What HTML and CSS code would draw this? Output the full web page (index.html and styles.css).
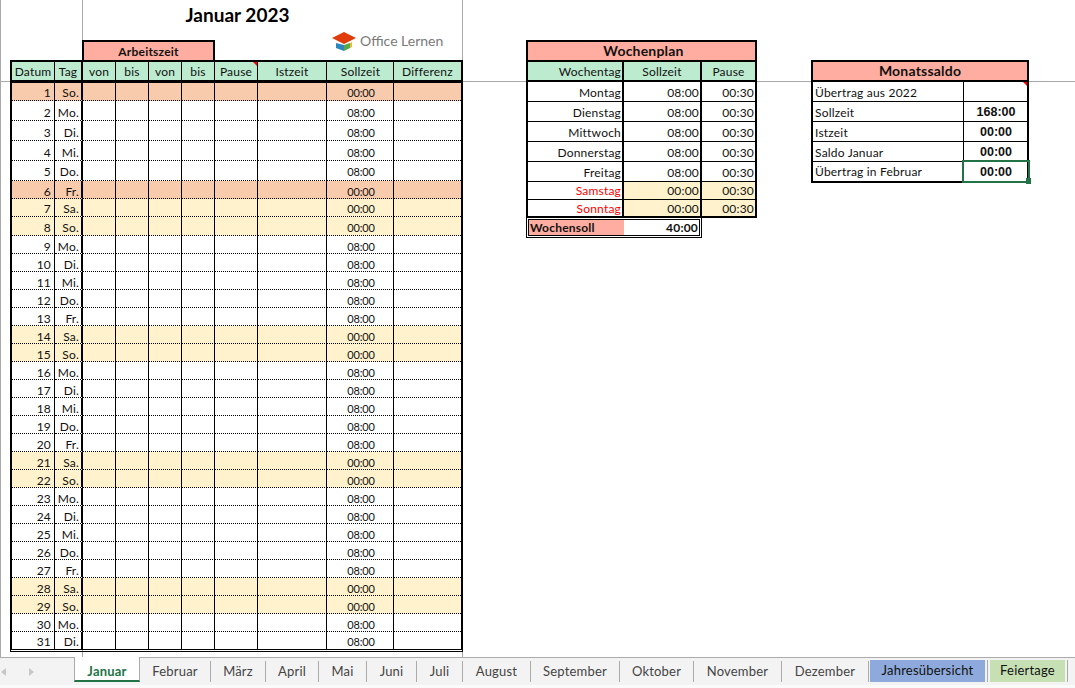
FILE: index.html
```html
<!DOCTYPE html>
<html lang="de">
<head>
<meta charset="utf-8">
<title>Januar 2023</title>
<link rel="stylesheet" href="styles.css">
</head>
<body>
<div class="sheet">
  <span class="grid-line v-left"></span>
  <span class="grid-line v-freeze"></span>
  <span class="grid-line v-right"></span>
  <span class="grid-line h-freeze"></span>
  <section class="month">
    <h1 class="title">Januar 2023</h1>
    <div class="band">Arbeitszeit</div>
    <div class="logo">
      <svg width="24" height="20" viewBox="0 0 24 20"><path d="M4 12v5l8 3V14z" fill="#2e86c1"/><path d="M12 14v6l6-3v-5z" fill="#5aa845"/><path d="M18 12v5l2-1v-5z" fill="#f2b632"/><path d="M0 7 12 1l12 6-12 6z" fill="#e03c0a"/></svg>
      <span>Office Lernen</span>
    </div>
    <table class="days">
      <colgroup><col class="c-dat"><col class="c-tag"><col class="c-t"><col class="c-t"><col class="c-t"><col class="c-t"><col class="c-pau"><col class="c-ist"><col class="c-sol"><col class="c-dif"></colgroup>
      <thead><tr><th>Datum</th><th class="tag">Tag</th><th>von</th><th>bis</th><th>von</th><th>bis</th><th class="note">Pause</th><th>Istzeit</th><th>Sollzeit</th><th>Differenz</th></tr></thead>
      <tbody>
        <tr class="r18 low hol"><td class="n">1</td><td class="d">So.</td><td></td><td></td><td></td><td></td><td></td><td></td><td>00:00</td><td></td></tr>
        <tr class="r20 low"><td class="n">2</td><td class="d">Mo.</td><td></td><td></td><td></td><td></td><td></td><td></td><td>08:00</td><td></td></tr>
        <tr class="r20 low"><td class="n">3</td><td class="d">Di.</td><td></td><td></td><td></td><td></td><td></td><td></td><td>08:00</td><td></td></tr>
        <tr class="r20 low"><td class="n">4</td><td class="d">Mi.</td><td></td><td></td><td></td><td></td><td></td><td></td><td>08:00</td><td></td></tr>
        <tr class="r20"><td class="n">5</td><td class="d">Do.</td><td></td><td></td><td></td><td></td><td></td><td></td><td>08:00</td><td></td></tr>
        <tr class="r18 lower hol"><td class="n">6</td><td class="d">Fr.</td><td></td><td></td><td></td><td></td><td></td><td></td><td>00:00</td><td></td></tr>
        <tr class="r18 low wk"><td class="n">7</td><td class="d">Sa.</td><td></td><td></td><td></td><td></td><td></td><td></td><td>00:00</td><td></td></tr>
        <tr class="r19 low wk"><td class="n">8</td><td class="d">So.</td><td></td><td></td><td></td><td></td><td></td><td></td><td>00:00</td><td></td></tr>
        <tr class="r18 lower"><td class="n">9</td><td class="d">Mo.</td><td></td><td></td><td></td><td></td><td></td><td></td><td>08:00</td><td></td></tr>
        <tr class="r18 lower"><td class="n">10</td><td class="d">Di.</td><td></td><td></td><td></td><td></td><td></td><td></td><td>08:00</td><td></td></tr>
        <tr class="r18 lower"><td class="n">11</td><td class="d">Mi.</td><td></td><td></td><td></td><td></td><td></td><td></td><td>08:00</td><td></td></tr>
        <tr class="r18 lower"><td class="n">12</td><td class="d">Do.</td><td></td><td></td><td></td><td></td><td></td><td></td><td>08:00</td><td></td></tr>
        <tr class="r18 lower"><td class="n">13</td><td class="d">Fr.</td><td></td><td></td><td></td><td></td><td></td><td></td><td>08:00</td><td></td></tr>
        <tr class="r18 lower wk"><td class="n">14</td><td class="d">Sa.</td><td></td><td></td><td></td><td></td><td></td><td></td><td>00:00</td><td></td></tr>
        <tr class="r18 lower wk"><td class="n">15</td><td class="d">So.</td><td></td><td></td><td></td><td></td><td></td><td></td><td>00:00</td><td></td></tr>
        <tr class="r18 lower"><td class="n">16</td><td class="d">Mo.</td><td></td><td></td><td></td><td></td><td></td><td></td><td>08:00</td><td></td></tr>
        <tr class="r18 lower"><td class="n">17</td><td class="d">Di.</td><td></td><td></td><td></td><td></td><td></td><td></td><td>08:00</td><td></td></tr>
        <tr class="r18 lower"><td class="n">18</td><td class="d">Mi.</td><td></td><td></td><td></td><td></td><td></td><td></td><td>08:00</td><td></td></tr>
        <tr class="r18 lower"><td class="n">19</td><td class="d">Do.</td><td></td><td></td><td></td><td></td><td></td><td></td><td>08:00</td><td></td></tr>
        <tr class="r18 lower"><td class="n">20</td><td class="d">Fr.</td><td></td><td></td><td></td><td></td><td></td><td></td><td>08:00</td><td></td></tr>
        <tr class="r18 lower wk"><td class="n">21</td><td class="d">Sa.</td><td></td><td></td><td></td><td></td><td></td><td></td><td>00:00</td><td></td></tr>
        <tr class="r18 lower wk"><td class="n">22</td><td class="d">So.</td><td></td><td></td><td></td><td></td><td></td><td></td><td>00:00</td><td></td></tr>
        <tr class="r18 lower"><td class="n">23</td><td class="d">Mo.</td><td></td><td></td><td></td><td></td><td></td><td></td><td>08:00</td><td></td></tr>
        <tr class="r18 lower"><td class="n">24</td><td class="d">Di.</td><td></td><td></td><td></td><td></td><td></td><td></td><td>08:00</td><td></td></tr>
        <tr class="r18 lower"><td class="n">25</td><td class="d">Mi.</td><td></td><td></td><td></td><td></td><td></td><td></td><td>08:00</td><td></td></tr>
        <tr class="r18 lower"><td class="n">26</td><td class="d">Do.</td><td></td><td></td><td></td><td></td><td></td><td></td><td>08:00</td><td></td></tr>
        <tr class="r18 lower"><td class="n">27</td><td class="d">Fr.</td><td></td><td></td><td></td><td></td><td></td><td></td><td>08:00</td><td></td></tr>
        <tr class="r18 lower wk"><td class="n">28</td><td class="d">Sa.</td><td></td><td></td><td></td><td></td><td></td><td></td><td>00:00</td><td></td></tr>
        <tr class="r18 lower wk"><td class="n">29</td><td class="d">So.</td><td></td><td></td><td></td><td></td><td></td><td></td><td>00:00</td><td></td></tr>
        <tr class="r18 lower"><td class="n">30</td><td class="d">Mo.</td><td></td><td></td><td></td><td></td><td></td><td></td><td>08:00</td><td></td></tr>
        <tr class="r17 low last"><td class="n">31</td><td class="d">Di.</td><td></td><td></td><td></td><td></td><td></td><td></td><td>08:00</td><td></td></tr>
      </tbody>
    </table>
  </section>

  <section class="plan">
    <table class="plan-table">
      <colgroup><col class="p-day"><col class="p-sol"><col class="p-pau"></colgroup>
      <thead>
        <tr class="head-salmon"><th colspan="3">Wochenplan</th></tr>
        <tr class="head-green"><th class="right">Wochentag</th><th>Sollzeit</th><th>Pause</th></tr>
      </thead>
      <tbody>
        <tr class="r20"><td>Montag</td><td>08:00</td><td>00:30</td></tr>
        <tr class="r20"><td>Dienstag</td><td>08:00</td><td>00:30</td></tr>
        <tr class="r20"><td>Mittwoch</td><td>08:00</td><td>00:30</td></tr>
        <tr class="r20"><td>Donnerstag</td><td>08:00</td><td>00:30</td></tr>
        <tr class="r20"><td>Freitag</td><td>08:00</td><td>00:30</td></tr>
        <tr class="r18 off"><td>Samstag</td><td>00:00</td><td>00:30</td></tr>
        <tr class="r16 off"><td>Sonntag</td><td>00:00</td><td>00:30</td></tr>
      </tbody>
    </table>
    <div class="total"><span class="total-label">Wochensoll</span><span class="total-value">40:00</span></div>
  </section>

  <section class="saldo">
    <table class="saldo-table">
      <colgroup><col class="s-lab"><col class="s-val"></colgroup>
      <thead><tr><th colspan="2">Monatssaldo</th></tr></thead>
      <tbody>
        <tr class="r20"><td>Übertrag aus 2022</td><td class="note"></td></tr>
        <tr class="r20"><td>Sollzeit</td><td>168:00</td></tr>
        <tr class="r20"><td>Istzeit</td><td>00:00</td></tr>
        <tr class="r20"><td>Saldo Januar</td><td>00:00</td></tr>
        <tr class="r19"><td>Übertrag in Februar</td><td class="selected">00:00</td></tr>
      </tbody>
    </table>
  </section>
</div>

<nav class="tabs">
  <div class="arrows"><span class="arrow-l"></span><span class="arrow-r"></span></div>
  <div class="tab active">Januar</div>
  <div class="tab">Februar</div>
  <div class="tab">März</div>
  <div class="tab">April</div>
  <div class="tab">Mai</div>
  <div class="tab">Juni</div>
  <div class="tab">Juli</div>
  <div class="tab">August</div>
  <div class="tab">September</div>
  <div class="tab">Oktober</div>
  <div class="tab">November</div>
  <div class="tab">Dezember</div>
  <div class="tab blue">Jahresübersicht</div>
  <div class="tab green">Feiertage</div>
</nav>
</body>
</html>
```
FILE: styles.css
```css
* { box-sizing: border-box; }
html, body { margin: 0; padding: 0; }
body {
  width: 1075px;
  height: 688px;
  overflow: hidden;
  background: #fff;
  font-family: Lato, "Liberation Sans", sans-serif;
  font-size: 12px;
  letter-spacing: 0.2px;
  color: #111;
}
.sheet {
  position: relative;
  z-index: 0;
  display: flex;
  align-items: flex-start;
  height: 657px;
  padding-left: 10px;
}
.grid-line { position: absolute; z-index: -1; background: #a9a9a9; }
.v-left { left: 0; top: 0; width: 1px; height: 657px; }
.v-freeze { left: 82px; top: 0; width: 1px; height: 657px; }
.v-right { left: 462px; top: 0; width: 1px; height: 657px; }
.h-freeze { left: 0; top: 81px; width: 1075px; height: 1px; }

.month { position: relative; width: 453px; flex: none; }
.title {
  margin: 0 0 0 72px;
  width: 311px;
  height: 40px;
  padding-top: 2px;
  font-size: 19px;
  line-height: 25px;
  font-weight: 700;
  letter-spacing: 0;
  text-align: center;
  color: #000;
}
.band {
  margin-left: 72px;
  width: 133px;
  height: 22px;
  margin-bottom: -2px;
  border: 2px solid #000;
  border-bottom: 0;
  background: #ffada0;
  text-align: center;
  font-weight: 700;
  line-height: 19px;
}
.logo {
  position: absolute;
  left: 322px;
  top: 31px;
  display: flex;
  align-items: center;
  gap: 4px;
  color: #7a7a7a;
  font-size: 14px;
  letter-spacing: 0;
  line-height: 20px;
}
table { border-collapse: separate; border-spacing: 0; table-layout: fixed; }
td, th { padding: 0; font-weight: 400; overflow: hidden; white-space: nowrap; }

.days { width: 453px; border: 2px solid #000; border-bottom: 3px double #000; position: relative; }
.c-dat { width: 43px; } .c-tag { width: 28px; } .c-t { width: 33px; }
.c-pau { width: 43px; } .c-ist { width: 69px; } .c-sol { width: 67px; } .c-dif { width: 67px; }
.days th {
  height: 21px;
  background: #bdebd0;
  border-right: 1px solid #000;
  border-bottom: 3px solid #000;
  text-align: center;
  line-height: 17px;
  position: relative;
}
.days th.tag { border-right-width: 2px; }
.days th:last-child, .days td:last-child { border-right: 0; }
.days th:nth-child(9) { padding-left: 1px; }
.days td {
  border-right: 1px solid #000;
  border-bottom: 1px dotted #000;
  text-align: center;
  vertical-align: bottom;
  line-height: 17px;
}
.days td:nth-child(9) { padding-left: 2px; font-size: 11px; letter-spacing: -0.2px; }
.days td.d { border-right-width: 2px; text-align: right; padding-right: 2px; }
.days td.n { text-align: right; padding-right: 3px; }
.days .low td { line-height: 15px; }
.days .lower td { line-height: 13px; }
.days tr.last td { border-bottom: 0; }
.r16 td { height: 16px; }
.r17 td { height: 17px; }
.r18 td { height: 18px; }
.r19 td { height: 19px; }
.r20 td { height: 20px; }
.hol td { background: #f8cbad; }
.wk td { background: #fff2cc; }
.note { position: relative; }
.note::after {
  content: "";
  position: absolute;
  top: 0;
  right: 0;
  border-top: 4px solid #f00;
  border-left: 4px solid transparent;
}

.plan { margin: 40px 0 0 63px; width: 231px; flex: none; }
.plan-table { width: 231px; border: 2px solid #000; }
.p-day { width: 96px; } .p-sol { width: 78px; } .p-pau { width: 53px; }
.head-salmon th {
  height: 20px;
  padding-left: 4px;
  background: #ffada0;
  font-weight: 700;
  font-size: 14px;
  line-height: 18px;
  border-bottom: 2px solid #000;
  text-align: center;
}
.head-green th {
  height: 20px;
  background: #bdebd0;
  border-right: 2px solid #000;
  border-bottom: 2px solid #000;
  line-height: 17px;
  text-align: center;
}
.head-green th.right { text-align: right; padding-right: 1px; }
.head-green th:last-child { border-right: 0; }
.plan-table td {
  text-align: right;
  vertical-align: bottom;
  line-height: 17px;
  padding-right: 1px;
  border-right: 2px solid #000;
  border-bottom: 1px solid #000;
}
.plan-table .r16 td { line-height: 15px; }
.plan-table td:last-child { border-right: 0; }
.plan-table tr:last-child td { border-bottom: 0; }
.off td:first-child { color: #f00; }
.off td:not(:first-child) { background: #fff2cc; }
.total {
  display: flex;
  width: 176px;
  height: 21px;
  margin-top: -1px;
  border: 3px double #000;
  font-weight: 700;
  line-height: 15px;
}
.total-label { width: 95px; background: #ffada0; padding-left: 1px; }
.total-value { flex: 1; text-align: right; padding-right: 1px; }

.saldo { margin: 60px 0 0 54px; width: 218px; flex: none; }
.saldo-table { width: 218px; border: 2px solid #000; }
.s-lab { width: 151px; } .s-val { width: 63px; }
.saldo-table th {
  height: 20px;
  background: #ffada0;
  font-weight: 700;
  font-size: 14px;
  line-height: 18px;
  border-bottom: 2px solid #000;
  text-align: center;
}
.saldo-table td {
  vertical-align: bottom;
  line-height: 17px;
  padding-left: 2px;
  border-right: 1px solid #000;
  border-bottom: 1px solid #000;
}
.saldo-table td:last-child {
  border-right: 0;
  text-align: center;
  font-weight: 700;
  font-family: "Liberation Sans", sans-serif;
  font-size: 12.5px;
  letter-spacing: 0;
  padding-left: 1px;
}
.saldo-table tr:last-child td { border-bottom: 0; padding-bottom: 1px; line-height: 16px; }
.saldo-table td.selected { position: relative; overflow: visible; }
.selected::before {
  content: "";
  position: absolute;
  left: -2px;
  top: -2px;
  right: -3px;
  bottom: -2px;
  border: 2px solid #217346;
}
.selected::after {
  content: "";
  position: absolute;
  right: -4px;
  bottom: -3px;
  width: 5px;
  height: 6px;
  background: #217346;
}

.tabs {
  display: grid;
  grid-template-columns: 74px 66px 71px 55px 53px 48px 50px 46px 68px 89px 74px 88px 87px 121px 76px;
  height: 31px;
  background: linear-gradient(#f3f3f3 27px, #fafafa 27px);
  border-top: 1px solid #ababab;
  font-size: 13px;
  color: #444;
}
.arrows { display: flex; align-items: center; gap: 23px; padding: 0 0 3px 1px; }
.arrow-l { border-right: 5px solid #c8c8c8; border-top: 4px solid transparent; border-bottom: 4px solid transparent; }
.arrow-r { border-left: 5px solid #c8c8c8; border-top: 4px solid transparent; border-bottom: 4px solid transparent; }
.tab {
  height: 21px;
  margin-top: 3px;
  line-height: 20px;
  text-align: center;
  border-right: 1px solid #ababab;
}
.tab.active {
  height: 25px;
  margin-top: -1px;
  padding-top: 4px;
  background: #fff;
  border-left: 1px solid #ababab;
  border-right: 1px solid #ababab;
  border-bottom: 2px solid #217346;
  color: #217346;
  font-weight: 700;
}
.tab.blue, .tab.green {
  position: relative;
  height: 22px;
  margin-top: 2px;
  color: #111;
  border: 0;
  line-height: 21px;
}
.tab.blue { margin-left: 1px; margin-right: 5px; background: #8ea9db; }
.tab.green { margin-right: 1px; background: #c6e0b4; }
.tab.blue::after, .tab.green::after {
  content: "";
  position: absolute;
  right: -3px;
  top: 0;
  width: 1px;
  height: 22px;
  background: #ababab;
}
```
